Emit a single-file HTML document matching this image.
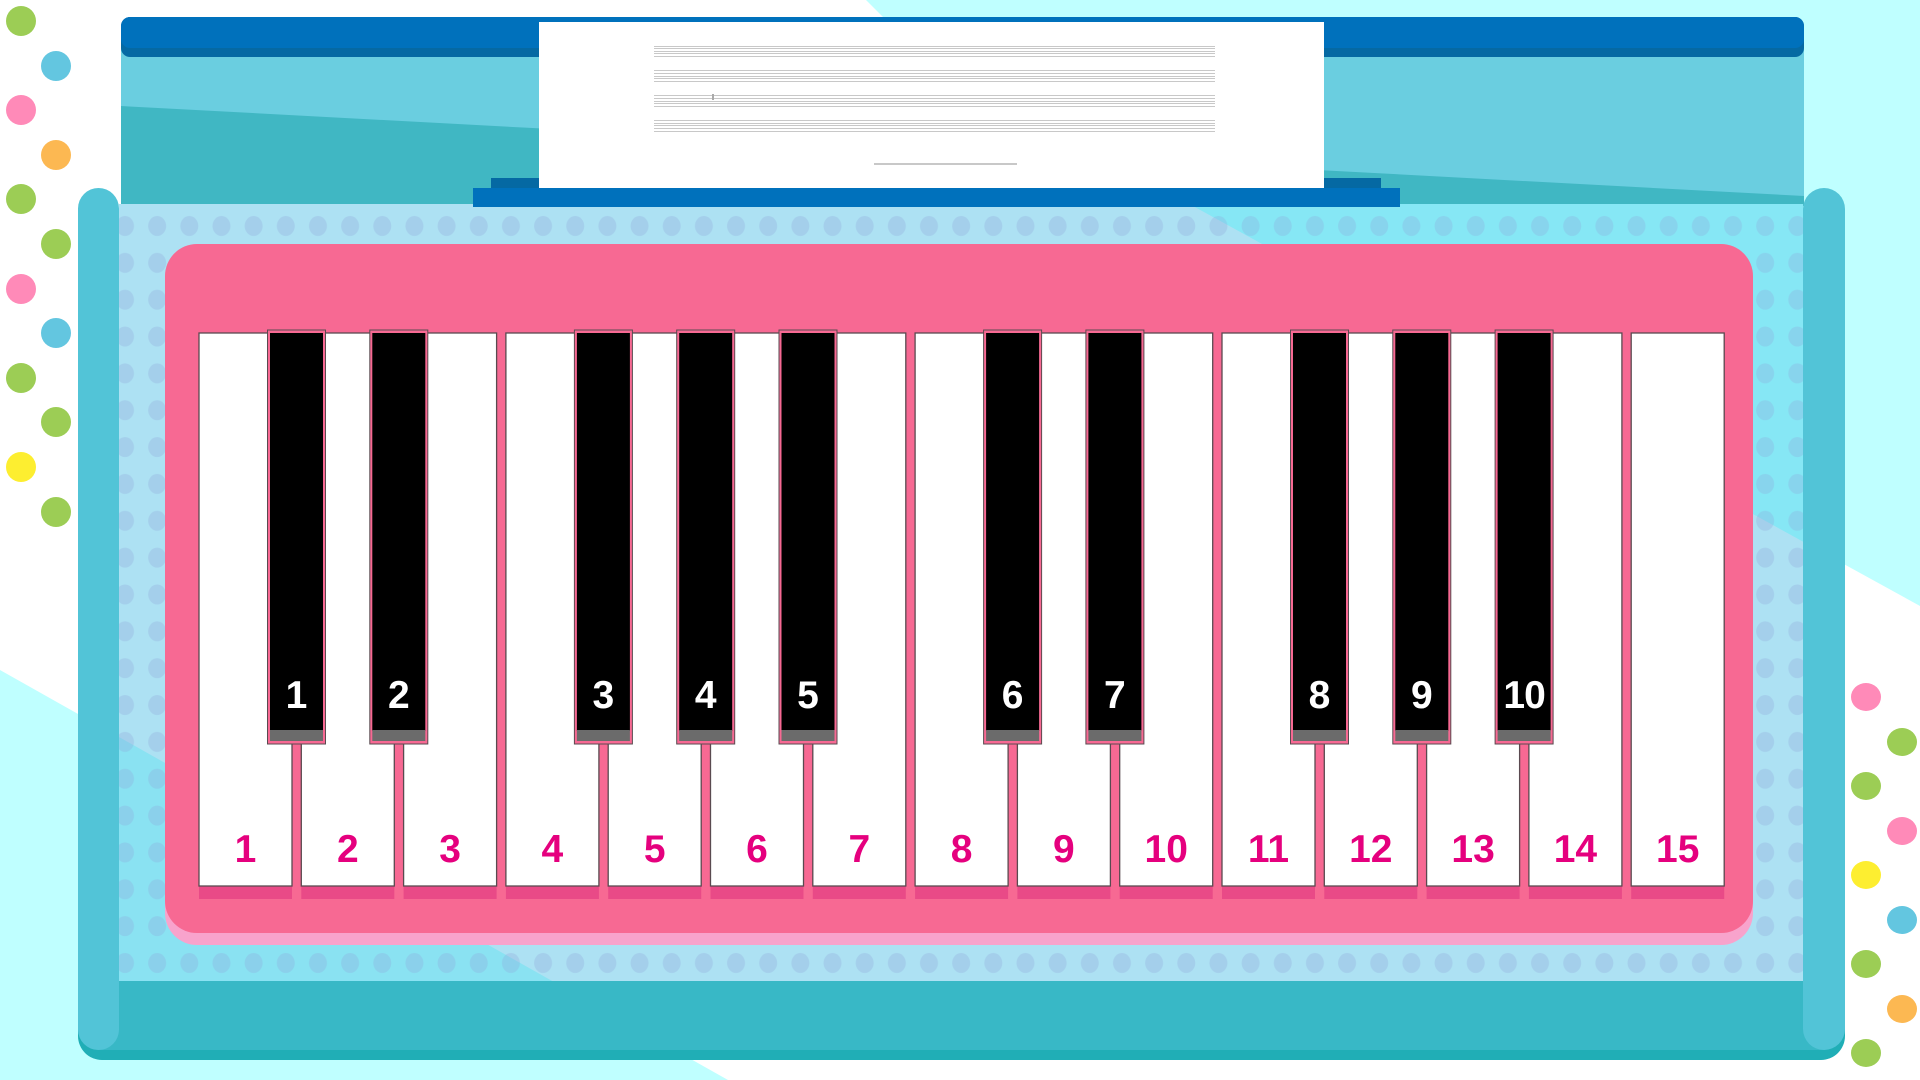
<!DOCTYPE html>
<html><head><meta charset="utf-8"><style>
html,body{margin:0;padding:0;width:1920px;height:1080px;overflow:hidden;background:#fff}
svg{display:block}
text{font-family:"Liberation Sans",sans-serif;font-weight:bold;text-anchor:middle}
</style></head><body>
<svg width="1920" height="1080" viewBox="0 0 1920 1080" xmlns="http://www.w3.org/2000/svg">
<defs>
<pattern id="dots" x="109" y="208" width="32.16" height="36.85" patternUnits="userSpaceOnUse">
<ellipse cx="16" cy="18" rx="9" ry="10" fill="#8c9fd8" fill-opacity="0.28"/>
</pattern>
<clipPath id="inner"><rect x="119" y="204" width="1684" height="777"/></clipPath>
</defs>
<rect width="1920" height="1080" fill="#fff"/>
<polygon points="866,0 1920,0 1920,606 924,58" fill="#bfffff"/>
<polygon points="0,670 0,1080 728,1080" fill="#bfffff"/>
<g>
<ellipse cx="21" cy="21" rx="15" ry="15" fill="#9ccd55"/>
<ellipse cx="56" cy="66" rx="15" ry="15" fill="#63c6e0"/>
<ellipse cx="21" cy="110" rx="15" ry="15" fill="#ff8ab8"/>
<ellipse cx="56" cy="155" rx="15" ry="15" fill="#fcb852"/>
<ellipse cx="21" cy="199" rx="15" ry="15" fill="#9ccd55"/>
<ellipse cx="56" cy="244" rx="15" ry="15" fill="#9ccd55"/>
<ellipse cx="21" cy="289" rx="15" ry="15" fill="#ff8ab8"/>
<ellipse cx="56" cy="333" rx="15" ry="15" fill="#63c6e0"/>
<ellipse cx="21" cy="378" rx="15" ry="15" fill="#9ccd55"/>
<ellipse cx="56" cy="422" rx="15" ry="15" fill="#9ccd55"/>
<ellipse cx="21" cy="467" rx="15" ry="15" fill="#fdee30"/>
<ellipse cx="56" cy="512" rx="15" ry="15" fill="#9ccd55"/>
<ellipse cx="1866" cy="697" rx="15" ry="14" fill="#ff8ab8"/>
<ellipse cx="1902" cy="742" rx="15" ry="14" fill="#9ccd55"/>
<ellipse cx="1866" cy="786" rx="15" ry="14" fill="#9ccd55"/>
<ellipse cx="1902" cy="831" rx="15" ry="14" fill="#ff8ab8"/>
<ellipse cx="1866" cy="875" rx="15" ry="14" fill="#fdee30"/>
<ellipse cx="1902" cy="920" rx="15" ry="14" fill="#63c6e0"/>
<ellipse cx="1866" cy="964" rx="15" ry="14" fill="#9ccd55"/>
<ellipse cx="1902" cy="1009" rx="15" ry="14" fill="#fcb852"/>
<ellipse cx="1866" cy="1053" rx="15" ry="14" fill="#9ccd55"/>
</g>
<rect x="121" y="40" width="1683" height="166" fill="#6acee0"/>
<polygon points="121,106 1804,196 1804,206 121,206" fill="#40b7c3"/>
<rect x="121" y="17" width="1683" height="40" rx="9" fill="#0569a3"/>
<rect x="121" y="17" width="1683" height="31" rx="9" fill="#0071bc"/>
<g clip-path="url(#inner)">
<rect x="119" y="204" width="1684" height="777" fill="#ade1f3"/>
<polygon points="866,0 1920,0 1920,606 924,58" fill="#86e7f5"/>
<polygon points="0,670 0,1080 728,1080" fill="#8ae2f2"/>
<rect x="119" y="204" width="1684" height="777" fill="url(#dots)"/>
</g>
<rect x="78" y="981" width="1767" height="79" rx="24" fill="#20aeb6"/>
<rect x="78" y="981" width="1767" height="69" rx="22" fill="#38b8c6"/>
<rect x="78" y="981" width="1767" height="24" fill="#38b8c6"/>
<rect x="78" y="188" width="41" height="862" rx="20.5" fill="#52c4d7"/>
<rect x="1803" y="188" width="42" height="862" rx="21" fill="#52c4d7"/>
<rect x="491" y="178" width="60" height="12" fill="#0569a3"/>
<rect x="1320" y="178" width="61" height="12" fill="#0569a3"/>
<rect x="473" y="188" width="927" height="19" fill="#0071bc"/>
<rect x="539" y="22" width="785" height="166" fill="#fff"/>
<g stroke="#c8c8c8" stroke-width="1">
<line x1="654" y1="46.5" x2="1215" y2="46.5"/><line x1="654" y1="48.5" x2="1215" y2="48.5"/><line x1="654" y1="51.5" x2="1215" y2="51.5"/><line x1="654" y1="53.5" x2="1215" y2="53.5"/><line x1="654" y1="56.5" x2="1215" y2="56.5"/>
<line x1="654" y1="70.5" x2="1215" y2="70.5"/><line x1="654" y1="73.5" x2="1215" y2="73.5"/><line x1="654" y1="76.5" x2="1215" y2="76.5"/><line x1="654" y1="78.5" x2="1215" y2="78.5"/><line x1="654" y1="81.5" x2="1215" y2="81.5"/>
<line x1="654" y1="95.5" x2="1215" y2="95.5"/><line x1="654" y1="98.5" x2="1215" y2="98.5"/><line x1="654" y1="101.5" x2="1215" y2="101.5"/><line x1="654" y1="103.5" x2="1215" y2="103.5"/><line x1="654" y1="106.5" x2="1215" y2="106.5"/>
<line x1="654" y1="120.5" x2="1215" y2="120.5"/><line x1="654" y1="123.5" x2="1215" y2="123.5"/><line x1="654" y1="125.5" x2="1215" y2="125.5"/><line x1="654" y1="128.5" x2="1215" y2="128.5"/><line x1="654" y1="131.5" x2="1215" y2="131.5"/>
<line x1="713" y1="94" x2="713" y2="100" stroke="#aaa" stroke-width="2"/>
</g>
<rect x="874" y="163" width="143" height="2" fill="#c8c8c8"/>
<rect x="165" y="256" width="1588" height="689" rx="32" fill="#f8a3cc"/>
<rect x="165" y="244" width="1588" height="689" rx="32" fill="#f76993"/>
<g>
<g fill="#e94a87">
<rect x="199" y="886" width="93" height="13"/><rect x="301.3" y="886" width="93" height="13"/><rect x="403.6" y="886" width="93" height="13"/><rect x="505.9" y="886" width="93" height="13"/><rect x="608.2" y="886" width="93" height="13"/><rect x="710.5" y="886" width="93" height="13"/><rect x="812.8" y="886" width="93" height="13"/><rect x="915.1" y="886" width="93" height="13"/><rect x="1017.4" y="886" width="93" height="13"/><rect x="1119.7" y="886" width="93" height="13"/><rect x="1222" y="886" width="93" height="13"/><rect x="1324.3" y="886" width="93" height="13"/><rect x="1426.6" y="886" width="93" height="13"/><rect x="1528.9" y="886" width="93" height="13"/><rect x="1631.2" y="886" width="93" height="13"/>
</g>
<g fill="#fff" stroke="#5a4a50" stroke-width="1.3">
<rect x="199" y="333" width="93" height="553"/><rect x="301.3" y="333" width="93" height="553"/><rect x="403.6" y="333" width="93" height="553"/><rect x="505.9" y="333" width="93" height="553"/><rect x="608.2" y="333" width="93" height="553"/><rect x="710.5" y="333" width="93" height="553"/><rect x="812.8" y="333" width="93" height="553"/><rect x="915.1" y="333" width="93" height="553"/><rect x="1017.4" y="333" width="93" height="553"/><rect x="1119.7" y="333" width="93" height="553"/><rect x="1222" y="333" width="93" height="553"/><rect x="1324.3" y="333" width="93" height="553"/><rect x="1426.6" y="333" width="93" height="553"/><rect x="1528.9" y="333" width="93" height="553"/><rect x="1631.2" y="333" width="93" height="553"/>
</g>
<g fill="#e5007e" font-size="39">
<text x="245.5" y="862">1</text><text x="347.8" y="862">2</text><text x="450.1" y="862">3</text><text x="552.4" y="862">4</text><text x="654.7" y="862">5</text><text x="757" y="862">6</text><text x="859.3" y="862">7</text><text x="961.6" y="862">8</text><text x="1063.9" y="862">9</text><text x="1166.2" y="862">10</text><text x="1268.5" y="862">11</text><text x="1370.8" y="862">12</text><text x="1473.1" y="862">13</text><text x="1575.4" y="862">14</text><text x="1677.7" y="862">15</text>
</g>
</g>
<g>
<g fill="#f76993" stroke="#5a4a50" stroke-width="1">
<rect x="267.5" y="330" width="58" height="414"/><rect x="369.8" y="330" width="58" height="414"/><rect x="574.4" y="330" width="58" height="414"/><rect x="676.7" y="330" width="58" height="414"/><rect x="779" y="330" width="58" height="414"/><rect x="983.6" y="330" width="58" height="414"/><rect x="1085.9" y="330" width="58" height="414"/><rect x="1290.5" y="330" width="58" height="414"/><rect x="1392.8" y="330" width="58" height="414"/><rect x="1495.1" y="330" width="58" height="414"/>
</g>
<g fill="#000">
<rect x="270" y="333" width="53" height="398"/><rect x="372.3" y="333" width="53" height="398"/><rect x="576.9" y="333" width="53" height="398"/><rect x="679.2" y="333" width="53" height="398"/><rect x="781.5" y="333" width="53" height="398"/><rect x="986.1" y="333" width="53" height="398"/><rect x="1088.4" y="333" width="53" height="398"/><rect x="1293" y="333" width="53" height="398"/><rect x="1395.3" y="333" width="53" height="398"/><rect x="1497.6" y="333" width="53" height="398"/>
</g>
<g fill="#6b6b6b">
<rect x="270" y="730" width="53" height="11"/><rect x="372.3" y="730" width="53" height="11"/><rect x="576.9" y="730" width="53" height="11"/><rect x="679.2" y="730" width="53" height="11"/><rect x="781.5" y="730" width="53" height="11"/><rect x="986.1" y="730" width="53" height="11"/><rect x="1088.4" y="730" width="53" height="11"/><rect x="1293" y="730" width="53" height="11"/><rect x="1395.3" y="730" width="53" height="11"/><rect x="1497.6" y="730" width="53" height="11"/>
</g>
<g fill="#fff" font-size="39">
<text x="296.5" y="708">1</text><text x="398.8" y="708">2</text><text x="603.4" y="708">3</text><text x="705.7" y="708">4</text><text x="808" y="708">5</text><text x="1012.6" y="708">6</text><text x="1114.9" y="708">7</text><text x="1319.5" y="708">8</text><text x="1421.8" y="708">9</text><text x="1524.1" y="708" letter-spacing="-1">10</text>
</g>
</g>
</svg>
</body></html>
